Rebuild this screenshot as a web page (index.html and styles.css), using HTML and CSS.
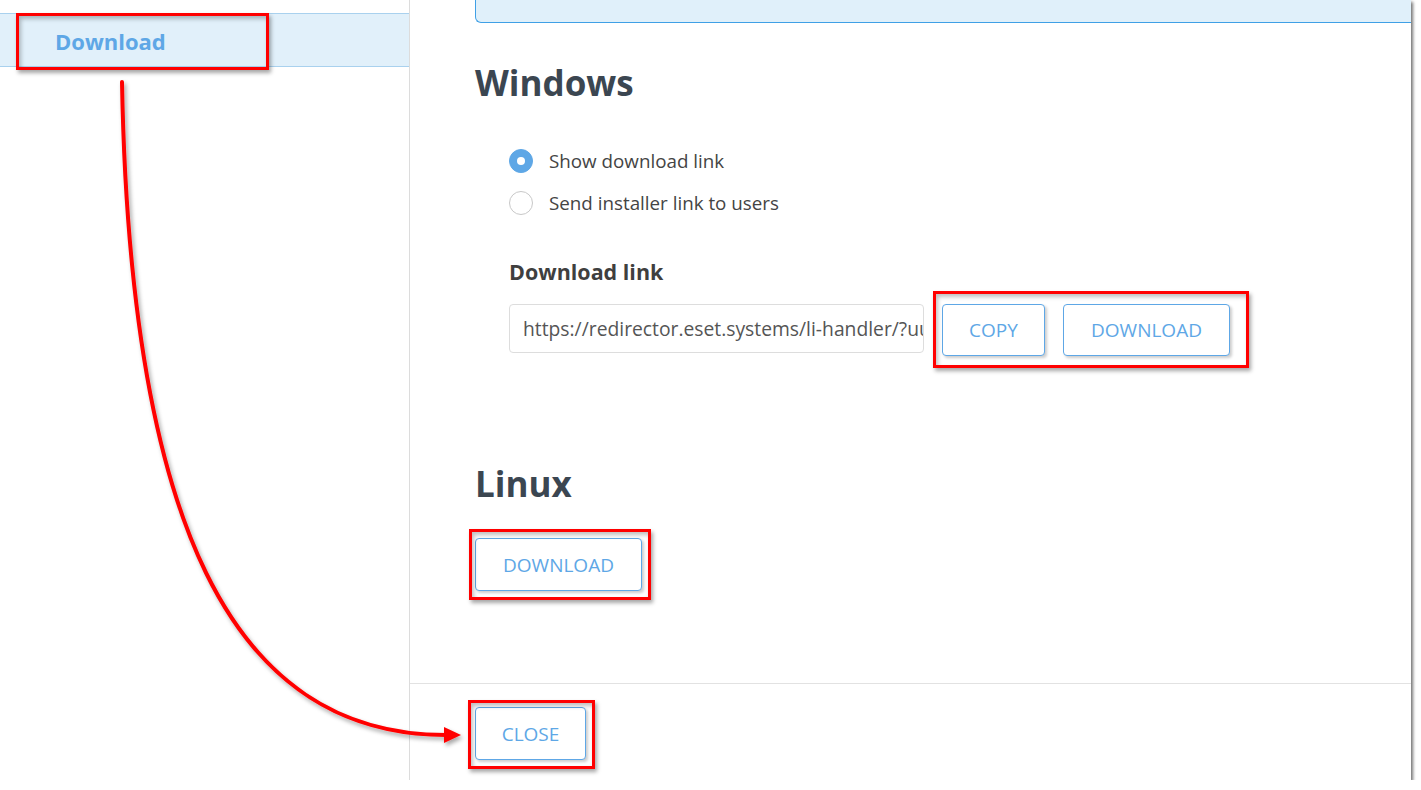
FILE: index.html
```html
<!DOCTYPE html>
<html lang="en">
<head>
    <meta charset="UTF-8">
    <title>Download installer</title>
    <link rel="stylesheet" href="styles.css">
</head>
<body>
<div class="page">
    <aside class="sidebar">
        <div class="nav-item active">Download</div>
    </aside>

    <main class="main">
        <div class="notice"></div>

        <div class="content">
            <h2 class="os-title">Windows</h2>

            <div class="section">
                <label class="radio-row">
                    <span class="radio checked"></span>
                    <span class="radio-label">Show download link</span>
                </label>
                <label class="radio-row">
                    <span class="radio"></span>
                    <span class="radio-label">Send installer link to users</span>
                </label>

                <div class="field-title">Download link</div>
                <div class="link-row">
                    <div class="link-input">https://redirector.eset.systems/li-handler/?uuid</div>
                    <button class="btn btn-copy">COPY</button>
                    <button class="btn btn-download">DOWNLOAD</button>
                </div>
            </div>

            <h2 class="os-title linux">Linux</h2>
            <button class="btn btn-download linux-btn">DOWNLOAD</button>
        </div>

        <div class="footer">
            <button class="btn btn-close">CLOSE</button>
        </div>
    </main>

    <!-- annotations drawn over the screenshot -->
    <div class="mark mark-nav"></div>
    <div class="mark mark-buttons"></div>
    <div class="mark mark-linux"></div>
    <div class="mark mark-close"></div>

    <svg class="arrow" width="1411" height="780" viewBox="0 0 1411 780">
        <defs>
            <filter id="shade" x="-10%" y="-10%" width="120%" height="120%">
                <feDropShadow dx="2" dy="3" stdDeviation="2" flood-color="#000" flood-opacity="0.35"/>
            </filter>
        </defs>
        <g filter="url(#shade)">
            <path d="M122,82 C130,520 230,735 446,735" fill="none" stroke="#ff0000" stroke-width="4" stroke-linecap="round"/>
            <polygon points="444,727 461,735 444,743" fill="#ff0000"/>
        </g>
    </svg>
</div>
</body>
</html>
```

FILE: styles.css
```css
body {
    margin: 0;
    background: #ffffff;
    font-family: "Open Sans", "Noto Sans", sans-serif;
    color: #444;
}

.page {
    position: relative;
    display: flex;
    width: 1411px;
    height: 780px;
    background: #fff;
    box-shadow: 2px 2px 3px rgba(0, 0, 0, 0.55);
}

.sidebar {
    width: 410px;
    flex-shrink: 0;
    border-right: 1px solid #dcdcdc;
    padding-top: 13px;
    box-sizing: border-box;
}

.nav-item {
    height: 54px;
    line-height: 54px;
    padding-left: 55px;
    font-size: 22px;
    font-weight: 700;
    color: #5ea7e6;
    background: #e1f0fa;
    border-top: 1px solid #a9d1ee;
    border-bottom: 1px solid #a9d1ee;
    box-sizing: border-box;
}

.main {
    flex: 1;
    display: flex;
    flex-direction: column;
}

.notice {
    height: 23px;
    margin-left: 65px;
    background: #e0f0fa;
    border: 1px solid #3fa0e6;
    border-top: none;
    border-right: none;
    border-bottom-left-radius: 6px;
    box-sizing: border-box;
}

.content {
    flex: 1;
    padding-left: 65px;
}

.os-title {
    margin: 40px 0 0;
    font-size: 35px;
    line-height: 40px;
    font-weight: 700;
    color: #3b4651;
}

.os-title.linux {
    margin-top: 108px;
}

.section {
    padding-left: 34px;
    padding-top: 37px;
}

.radio-row {
    display: flex;
    align-items: center;
    height: 42px;
}

.radio {
    width: 24px;
    height: 24px;
    border-radius: 50%;
    border: 1px solid #c8c8c8;
    box-sizing: border-box;
    background: #fff;
    margin-right: 16px;
    position: relative;
}

.radio.checked {
    background: #5ea7e6;
    border-color: #5ea7e6;
}

.radio.checked::after {
    content: "";
    position: absolute;
    left: 7px;
    top: 7px;
    width: 8px;
    height: 8px;
    border-radius: 50%;
    background: #fff;
}

.radio-label {
    font-size: 18.8px;
    color: #444;
}

.field-title {
    margin-top: 34px;
    font-size: 21.5px;
    line-height: 28px;
    font-weight: 700;
    color: #3f3f3f;
}

.link-row {
    display: flex;
    align-items: flex-start;
    gap: 18px;
    margin-top: 18px;
}

.link-input {
    width: 415px;
    height: 49px;
    box-sizing: border-box;
    border: 1px solid #dddddd;
    border-radius: 4px;
    padding: 0 0 0 13px;
    line-height: 47px;
    font-size: 19.3px;
    color: #555;
    white-space: nowrap;
    overflow: hidden;
}

.btn {
    height: 52px;
    box-sizing: border-box;
    border: 1px solid #5ea7e6;
    border-radius: 4px;
    background: #fff;
    color: #5ea7e6;
    font-family: "Open Sans", "Noto Sans", sans-serif;
    font-size: 19px;
    padding: 0;
    box-shadow: 2px 2px 3px rgba(0, 0, 0, 0.2);
}

.btn-copy {
    width: 103px;
}

.btn-download {
    width: 167px;
}

.linux-btn {
    display: block;
    height: 53px;
    margin-top: 34px;
}

.footer {
    height: 97px;
    border-top: 1px solid #e2e2e2;
    box-sizing: border-box;
    padding: 23px 0 0 65px;
}

.btn-close {
    width: 111px;
    height: 53px;
}

.mark {
    position: absolute;
    border: 3px solid #ff0000;
    box-sizing: border-box;
    box-shadow: 2px 3px 4px rgba(0, 0, 0, 0.35), inset 2px 3px 4px rgba(0, 0, 0, 0.25);
    pointer-events: none;
}

.mark-nav {
    left: 16px;
    top: 13px;
    width: 253px;
    height: 57px;
}

.mark-buttons {
    left: 933px;
    top: 291px;
    width: 316px;
    height: 77px;
}

.mark-linux {
    left: 469px;
    top: 529px;
    width: 182px;
    height: 71px;
}

.mark-close {
    left: 468px;
    top: 700px;
    width: 127px;
    height: 69px;
}

.arrow {
    position: absolute;
    left: 0;
    top: 0;
    pointer-events: none;
}
```
